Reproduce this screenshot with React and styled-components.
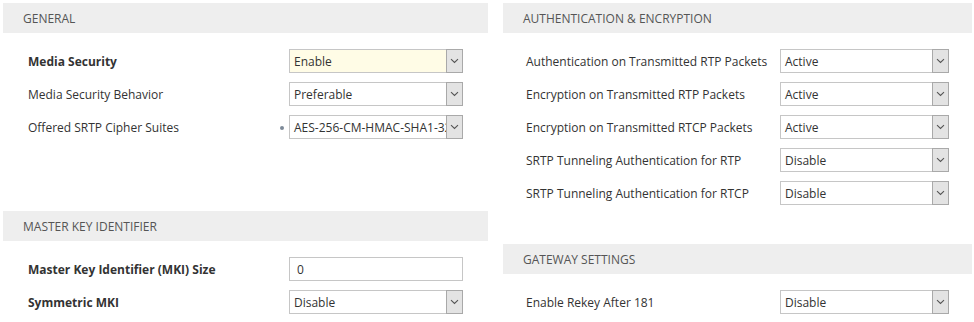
import React from 'react'
import styled, { createGlobalStyle } from 'styled-components'

const Global = createGlobalStyle`
  body {
    margin: 0;
    background: #fff;
    font-family: "Open Sans", "Liberation Sans", Arial, sans-serif;
    font-size: 12px;
    color: #333;
  }
`

const general = [
  { label: 'Media Security', value: 'Enable', bold: true, highlight: true },
  { label: 'Media Security Behavior', value: 'Preferable' },
  { label: 'Offered SRTP Cipher Suites', value: 'AES-256-CM-HMAC-SHA1-32', dot: true },
]

const mki = [
  { label: 'Master Key Identifier (MKI) Size', value: '0', bold: true, input: true },
  { label: 'Symmetric MKI', value: 'Disable', bold: true },
]

const auth = [
  { label: 'Authentication on Transmitted RTP Packets', value: 'Active' },
  { label: 'Encryption on Transmitted RTP Packets', value: 'Active' },
  { label: 'Encryption on Transmitted RTCP Packets', value: 'Active' },
  { label: 'SRTP Tunneling Authentication for RTP', value: 'Disable' },
  { label: 'SRTP Tunneling Authentication for RTCP', value: 'Disable' },
]

const gateway = [
  { label: 'Enable Rekey After 181', value: 'Disable' },
]

function Caret() {
  return (
    <svg width="9" height="6" viewBox="0 0 9 6">
      <path d="M1 1.2 L4.5 4.5 L8 1.2" fill="none" stroke="#555" strokeWidth="1.1" />
    </svg>
  )
}

function Field({ row }) {
  if (row.input) {
    return <TextBox>{row.value}</TextBox>
  }
  return (
    <SelectBox $highlight={row.highlight}>
      {row.dot && <Dot />}
      <SelectText>{row.value}</SelectText>
      <CaretButton><Caret /></CaretButton>
    </SelectBox>
  )
}

function Section({ title, rows, inset, fieldWidth, bottom }) {
  return (
    <Block $bottom={bottom}>
      <Header>{title}</Header>
      <Rows>
        {rows.map((row) => (
          <Row key={row.label} $inset={inset} $fieldWidth={fieldWidth}>
            <Label $bold={row.bold}>{row.label}</Label>
            <Field row={row} />
          </Row>
        ))}
      </Rows>
    </Block>
  )
}

function App() {
  return (
    <>
      <Global />
      <Page>
        <Column>
          <Section title="General" rows={general} inset={25} fieldWidth={174} bottom={72} />
          <Section title="Master Key Identifier" rows={mki} inset={25} fieldWidth={174} />
        </Column>
        <Column>
          <Section title="Authentication & Encryption" rows={auth} inset={23} fieldWidth={169} bottom={39} />
          <Section title="Gateway Settings" rows={gateway} inset={23} fieldWidth={169} />
        </Column>
      </Page>
    </>
  )
}

const Page = styled.div`
  display: grid;
  grid-template-columns: 485px 469px;
  column-gap: 15px;
  padding: 3px 2px 0 3px;
`

const Column = styled.div`
  display: flex;
  flex-direction: column;
`

const Block = styled.section`
  padding-bottom: ${(p) => p.$bottom || 0}px;
`

const Header = styled.div`
  height: 30px;
  overflow: hidden;
  background: #eeeeee;
  color: #555;
  text-transform: uppercase;
  font-size: 12px;
  line-height: 32px;
  padding-left: 20px;
`

const Rows = styled.div`
  display: flex;
  flex-direction: column;
  gap: 9px;
  padding-top: 16px;
`

const Row = styled.div`
  display: grid;
  grid-template-columns: 1fr ${(p) => p.$fieldWidth}px;
  align-items: center;
  padding: 0 ${(p) => p.$inset}px;
`

const Label = styled.div`
  font-weight: ${(p) => (p.$bold ? 700 : 400)};
  color: #333;
  white-space: nowrap;
  padding-top: 1px;
`

const SelectBox = styled.div`
  position: relative;
  display: flex;
  height: 24px;
  box-sizing: border-box;
  border: 1px solid #c6c6c6;
  background: ${(p) => (p.$highlight ? '#fffce6' : '#fff')};
`

const SelectText = styled.div`
  flex: 1;
  overflow: hidden;
  white-space: nowrap;
  padding-left: 4px;
  line-height: 24px;
  height: 22px;
  color: #333;
`

const CaretButton = styled.div`
  width: 17px;
  margin: -1px -1px -1px 0;
  box-sizing: border-box;
  border: 1px solid #a9a9a9;
  background: #e3e3e3;
  display: flex;
  align-items: center;
  justify-content: center;
`

const Dot = styled.span`
  position: absolute;
  left: -10px;
  top: 10px;
  width: 4px;
  height: 4px;
  border-radius: 50%;
  background: #7d8998;
`

const TextBox = styled.div`
  height: 24px;
  box-sizing: border-box;
  border: 1px solid #c6c6c6;
  padding-left: 7px;
  line-height: 24px;
  color: #333;
`

export default App
